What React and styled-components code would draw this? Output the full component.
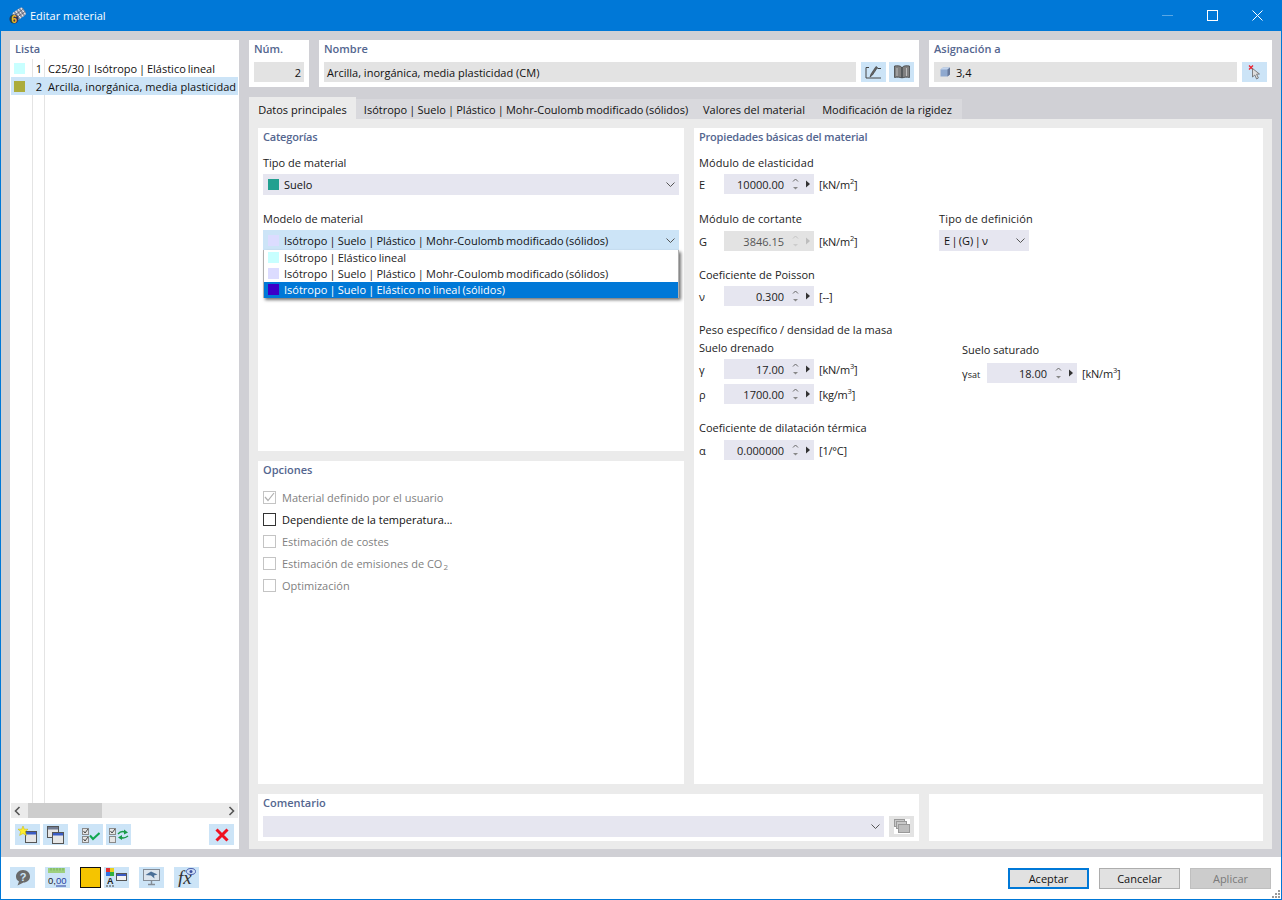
import React from "react";
import styled, { createGlobalStyle } from "styled-components";

const Global = createGlobalStyle`
html, body { margin: 0; padding: 0; background: #fff; }
body { font-family: "Open Sans", "Noto Sans", sans-serif; font-size: 11px; color: #1a1a1a; }
* { box-sizing: border-box; }
sup { line-height: 0; font-size: 7.5px; }
`;

const Window = styled.div`
  width: 1282px;
  height: 900px;
  display: flex;
  flex-direction: column;
  border: 1px solid #0078d7;
  border-top: 0;
  background: #fff;
  overflow: hidden;
`;
const TitleBar = styled.div`
  height: 31px;
  flex: none;
  background: #0078d7;
  color: #fff;
  display: flex;
  align-items: center;
  padding: 0 1px 0 8px;
  font-size: 11px;
`;
const TitleText = styled.span`
  margin-left: 4px;
  flex: 1;
`;
const WinBtn = styled.div`
  width: 45px;
  height: 31px;
  display: flex;
  align-items: center;
  justify-content: center;
  opacity: ${(p) => (p.$off ? 0.35 : 1)};
`;
const Body = styled.div`
  height: 826px;
  flex: none;
  background: #d0d0d5;
  padding: 9px 9px 8px 9px;
  display: flex;
  gap: 10px;
`;
const ListPanel = styled.div`
  width: 229px;
  background: #fff;
  display: flex;
  flex-direction: column;
  padding: 0 1px 4px;
`;
const Heading = styled.div`
  height: 17px;
  line-height: 17px;
  font-weight: 600;
  color: #54668f;
  padding-left: ${(p) => p.$pad ?? 5}px;
  letter-spacing: ${(p) => p.$ls ?? 0}px;
`;
const ListBody = styled.div`
  flex: 1;
  position: relative;
  margin-top: 2px;
  background-image: linear-gradient(#e4e4e4, #e4e4e4), linear-gradient(#e4e4e4, #e4e4e4);
  background-size: 1px 100%, 1px 100%;
  background-position: 21px 0, 33px 0;
  background-repeat: no-repeat;
`;
const ListRow = styled.div`
  height: 18px;
  display: flex;
  align-items: center;
  background: ${(p) => (p.$sel ? "#cce4f7" : "transparent")};
  color: #111;
`;
const Swatch = styled.span`
  width: 11px;
  height: 11px;
  flex: none;
  background: ${(p) => p.$c};
`;
const ListSwatch = styled(Swatch)`
  margin-left: 3px;
`;
const ListNum = styled.span`
  width: 17px;
  text-align: right;
`;
const ListText = styled.span`
  margin-left: 6px;
  white-space: nowrap;
  word-spacing: ${(p) => (p.$pipes ? "-1px" : "0")};
  letter-spacing: ${(p) => (p.$pipes ? "0" : "0.05px")};
`;
const HScroll = styled.div`
  height: 15px;
  flex: none;
  background: #ebebeb;
  display: flex;
  align-items: center;
  justify-content: space-between;
  padding: 0 3px;
  position: relative;
`;
const Thumb = styled.div`
  position: absolute;
  left: 17px;
  top: 0;
  width: 74px;
  height: 15px;
  background: #cdcdcd;
`;
const ListTools = styled.div`
  display: flex;
  padding: 6px 4px 0;
  height: 27px;
  flex: none;
`;
const IconBtn = styled.div`
  width: 25px;
  height: ${(p) => p.$h ?? 21}px;
  flex: none;
  background: ${(p) => (p.$grey ? "#e3e3e3" : "#cce4f7")};
  display: flex;
  align-items: center;
  justify-content: center;
  margin-left: ${(p) => p.$ml ?? 0}px;
`;
const Main = styled.div`
  flex: 1;
  display: flex;
  flex-direction: column;
  min-width: 0;
`;
const TopRow = styled.div`
  display: flex;
  gap: 10px;
  height: 47px;
  flex: none;
`;
const TopCard = styled.div`
  width: ${(p) => p.$w}px;
  background: #fff;
  padding: 0 5px;
`;
const TopHeading = styled(Heading)`
  padding-left: 0;
  height: 18px;
  line-height: 18px;
  margin-bottom: 4px;
`;
const InputLine = styled.div`
  display: flex;
  gap: ${(p) => p.$gap ?? 5}px;
`;
const Readonly = styled.div`
  flex: 1;
  height: 20px;
  background: #e3e3e3;
  display: flex;
  align-items: center;
  padding: 0 3px 0 ${(p) => p.$pl ?? 3}px;
  justify-content: ${(p) => (p.$right ? "flex-end" : "flex-start")};
  gap: 5px;
  color: #111;
`;
const Tabs = styled.div`
  display: flex;
  align-items: flex-end;
  margin-top: 10px;
  height: 22px;
  flex: none;
`;
const Tab = styled.div`
  height: ${(p) => (p.$active ? 22 : 20)}px;
  padding-top: ${(p) => (p.$active ? 3 : 1)}px;
  line-height: 19px;
  width: ${(p) => p.$w}px;
  white-space: nowrap;
  background: ${(p) => (p.$active ? "#ebebeb" : "#d9d9dd")};
  color: #111;
  text-align: center;
  word-spacing: ${(p) => (p.$pipes ? "-0.7px" : "0")};
`;
const TabPanel = styled.div`
  flex: 1;
  background: #ebebeb;
  padding: 9px 9px 8px;
  display: flex;
  flex-direction: column;
  gap: 10px;
`;
const Columns = styled.div`
  display: flex;
  gap: 10px;
  height: 656px;
  flex: none;
`;
const LeftCol = styled.div`
  width: 426px;
  display: flex;
  flex-direction: column;
  gap: 10px;
`;
const Card = styled.div`
  background: #fff;
  flex: ${(p) => p.$flex ?? 1};
  padding: 0 5px;
  position: relative;
  min-width: 0;
`;
const CardHeading = styled(Heading)`
  padding-left: 0;
  height: 18px;
  line-height: 18px;
`;
const FieldLabel = styled.div`
  height: 16px;
  line-height: 16px;
  color: #222;
  margin-top: ${(p) => p.$mt ?? 0}px;
  margin-bottom: ${(p) => p.$mb ?? 3}px;
  white-space: nowrap;
  letter-spacing: ${(p) => p.$ls ?? 0}px;
`;
const Select = styled.div`
  height: ${(p) => p.$h ?? 20}px;
  width: ${(p) => (p.$w ? p.$w + "px" : "auto")};
  flex: ${(p) => (p.$grow ? 1 : "none")};
  background: ${(p) => (p.$open ? "#cce4f7" : "#e6e6f0")};
  display: flex;
  align-items: center;
  padding-left: 5px;
  padding-right: 4px;
  gap: 5px;
  color: #111;
`;
const SelectText = styled.span`
  flex: 1;
  white-space: nowrap;
  word-spacing: ${(p) => p.$ws ?? 0}px;
`;
const DropWrap = styled.div`
  position: relative;
`;
const DropList = styled.div`
  position: absolute;
  top: 20px;
  left: 0;
  right: 0;
  background: #fff;
  border-left: 1px solid #b0b0b0;
  border-right: 1px solid #b0b0b0;
  box-shadow: 2px 2px 3px rgba(0, 0, 0, 0.55);
  z-index: 5;
`;
const DropItem = styled.div`
  height: 16px;
  display: flex;
  align-items: center;
  gap: 5px;
  padding: 0 0 1px 4px;
  word-spacing: -0.7px;
  background: ${(p) => (p.$hi ? "#0078d7" : "transparent")};
  color: ${(p) => (p.$hi ? "#fff" : "#222")};
`;
const Option = styled.div`
  height: 22px;
  display: flex;
  align-items: center;
  gap: 6px;
  color: ${(p) => (p.$on ? "#111" : "#7f7f7f")};
  white-space: nowrap;
`;
const Box = styled.span`
  width: 13px;
  height: 13px;
  flex: none;
  border: 1px solid ${(p) => (p.$on ? "#333" : "#c4c4c4")};
  display: flex;
  align-items: center;
  justify-content: center;
`;
const Options = styled.div`
  margin-top: 7px;
`;
const SmallTwo = styled.span`
  font-size: 8px;
  position: relative;
  top: 2px;
  margin-left: 1px;
`;
const RightGroups = styled.div`
  display: flex;
  flex-direction: column;
  padding-top: 9px;
`;
const Row = styled.div`
  display: flex;
  align-items: center;
  height: 20px;
  margin-top: ${(p) => p.$mt ?? 0}px;
`;
const Sym = styled.span`
  width: ${(p) => p.$w ?? 25}px;
  flex: none;
  color: #222;
  white-space: nowrap;
`;
const SymTail = styled.span`
  font-size: 9px;
`;
const Spin = styled.div`
  width: 90px;
  height: 20px;
  flex: none;
  background: ${(p) => (p.$off ? "#e3e3e3" : "#e6e6f0")};
  display: flex;
  align-items: center;
  justify-content: flex-end;
  padding-right: 4px;
  color: ${(p) => (p.$off ? "#555" : "#222")};
`;
const SpinVal = styled.span`
  margin-right: 8px;
`;
const Unit = styled.span`
  margin-left: 5px;
  color: #222;
  white-space: nowrap;
  letter-spacing: -0.2px;
`;
const TwoCols = styled.div`
  display: flex;
`;
const ColA = styled.div`
  width: ${(p) => p.$w}px;
  flex: none;
`;
const BottomRow = styled.div`
  display: flex;
  gap: 10px;
  height: 47px;
  flex: none;
`;
const CommentLine = styled.div`
  display: flex;
  gap: 5px;
  margin-top: 4px;
`;
const Footer = styled.div`
  flex: 1;
  display: flex;
  align-items: flex-start;
  padding: 10px 10px 0 9px;
  position: relative;
`;
const FootSpacer = styled.div`
  flex: 1;
`;
const ColorBox = styled.div`
  width: 21px;
  height: 21px;
  margin-left: 10px;
  background: #f5c400;
  border: 1px solid #111;
`;
const DlgBtn = styled.div`
  width: 81px;
  height: 21px;
  margin-top: 1px;
  margin-left: ${(p) => p.$ml ?? 10}px;
  display: flex;
  align-items: center;
  justify-content: center;
  background: ${(p) => (p.$off ? "#cccccc" : "#e1e1e1")};
  border: ${(p) => (p.$primary ? "2px solid #0078d7" : p.$off ? "1px solid #bfbfbf" : "1px solid #adadad")};
  color: ${(p) => (p.$off ? "#7a7a7a" : "#111")};
`;
const Grip = styled.svg`
  position: absolute;
  right: 0;
  bottom: 0;
`;

const Chevron = () => (
  <svg width="9" height="5" viewBox="0 0 9 5" fill="none">
    <path d="M0.5 0.5 L4.5 4.5 L8.5 0.5" stroke="#555" strokeWidth="1" />
  </svg>
);

const SpinArrows = ({ off }) => {
  const c = off ? "#c4c4c4" : "#666";
  return (
    <svg width="18" height="14" viewBox="0 0 18 14" style={{ flex: "none" }}>
      <path d="M1 4.5 L3.5 2 L6 4.5" fill="none" stroke={c} />
      <path d="M1 10 L6 10 L3.5 12.5 Z" fill={off ? "#ccc" : "#888"} />
      <path d="M14 3.5 L18 7 L14 10.5 Z" fill={off ? "#bdbdbd" : "#333"} />
    </svg>
  );
};

const AppIcon = () => (
  <svg width="17" height="17" viewBox="0 0 17 17">
    <g transform="rotate(-35 10 7)">
      <rect x="3.5" y="2.5" width="13" height="9" rx="3" fill="#8b92a3" />
      <path d="M6 2.5 V11.5 M9 2.5 V11.5 M12 2.5 V11.5 M15 3 V11" stroke="#f0f2f6" strokeWidth="1" />
      <path d="M3.5 5.5 H16.5 M3.5 8.5 H16.5" stroke="#50586a" strokeWidth="0.7" />
    </g>
    <circle cx="5" cy="12" r="4.6" fill="#263a5a" />
    <text x="5" y="15.6" textAnchor="middle" fontSize="10" fontWeight="700" fill="#f2bb1e" fontFamily="Liberation Sans">6</text>
  </svg>
);

const WindowSmall = ({ x, y, blue }) => (
  <g transform={`translate(${x} ${y})`}>
    <rect x="0.5" y="0.5" width="11" height="11" fill="#e6e6e6" stroke="#555" />
    <rect x="1" y="1" width="10" height="2.5" fill={blue ? "#3b5cc4" : "#6f7a92"} />
  </g>
);

const NewWindowIcon = () => (
  <svg width="21" height="18" viewBox="0 0 21 18">
    <WindowSmall x={8} y={5} blue />
    <path d="M6 0 L7.3 3.2 L11 3.2 L8.3 5.6 L9.4 9.4 L6 7.5 L2.6 9.4 L3.7 5.6 L1 3.2 L4.7 3.2 Z" fill="#ffee2e" stroke="#c9b400" strokeWidth="0.5" />
  </svg>
);
const CopyWindowIcon = () => (
  <svg width="17" height="18" viewBox="0 0 17 18">
    <WindowSmall x={0} y={0} />
    <WindowSmall x={5} y={6} blue />
  </svg>
);
const CheckBoxMini = ({ y, on }) => (
  <g transform={`translate(0 ${y})`}>
    <rect x="0.5" y="0.5" width="6" height="6" fill="#e4e4e4" stroke="#8a8a8a" />
    {on && <path d="M1.5 3 L3 5 L6 1" fill="none" stroke="#444" />}
  </g>
);
const CheckAllIcon = () => (
  <svg width="18" height="16" viewBox="0 0 18 16">
    <CheckBoxMini y={1} on />
    <CheckBoxMini y={9} on />
    <path d="M8 8.5 L11 12 L17.5 6" fill="none" stroke="#10a850" strokeWidth="2" />
  </svg>
);
const CheckSwapIcon = () => (
  <svg width="20" height="16" viewBox="0 0 20 16">
    <CheckBoxMini y={1} on />
    <CheckBoxMini y={9} />
    <path d="M9 7 Q12 3.5 16 5" fill="none" stroke="#1a9a48" strokeWidth="1.5" />
    <path d="M15 2.5 L19 5.5 L15 7.5 Z" fill="#1a9a48" />
    <path d="M19 9 Q15 12 12 10.5" fill="none" stroke="#1a9a48" strokeWidth="1.5" />
    <path d="M13 8 L9 10.5 L13 13 Z" fill="#1a9a48" />
  </svg>
);
const DeleteIcon = () => (
  <svg width="14" height="14" viewBox="0 0 14 14">
    <path d="M1.5 1.5 L12.5 12.5 M12.5 1.5 L1.5 12.5" stroke="#f01020" strokeWidth="3" />
  </svg>
);
const EditIcon = () => (
  <svg width="17" height="15" viewBox="0 0 17 15" fill="none">
    <path d="M4 2.5 L1 2.5 L1 13 L16 13 M12.5 3.5 L16 3.5" stroke="#444" />
    <path d="M5 12 L6 9 L11 1.5 L12.5 2.5 L7.5 10 Z" fill="#666" stroke="#333" strokeWidth="0.6" />
  </svg>
);
const BookIcon = () => (
  <svg width="16" height="14" viewBox="0 0 16 14">
    <path d="M0.5 1 C3 0.5 6 0.5 7.5 2 L7.5 13 C6 12 3 12 0.5 12.5 Z" fill="#808080" stroke="#333" strokeWidth="0.7" />
    <path d="M15.5 1 C13 0.5 10 0.5 8.5 2 L8.5 13 C10 12 13 12 15.5 12.5 Z" fill="#808080" stroke="#333" strokeWidth="0.7" />
    <path d="M3 3 V11 M12.5 3 V11" stroke="#ccc" strokeWidth="0.8" />
  </svg>
);
const CursorIcon = () => (
  <svg width="14" height="15" viewBox="0 0 14 15">
    <path d="M1 0.5 L5 4.5 M5 0.5 L1 4.5" stroke="#ee2030" strokeWidth="1.3" />
    <path d="M4.5 3.5 L4.5 12 L6.8 10 L8.6 14 L10.4 13 L8.6 9.2 L11.5 9 Z" fill="#ddd" stroke="#666" strokeWidth="0.8" />
  </svg>
);
const SolidIcon = () => (
  <svg width="11" height="10" viewBox="0 0 11 10">
    <path d="M0.5 2.5 L3 0.5 L10 0.5 L10 7.5 L7.5 9.5 L0.5 9.5 Z" fill="#8fa9cf" />
    <path d="M0.5 2.5 L7.5 2.5 L10 0.5 L3 0.5 Z" fill="#c3d4ec" />
    <path d="M7.5 2.5 L10 0.5 L10 7.5 L7.5 9.5 Z" fill="#66789a" />
  </svg>
);
const CommentIcon = () => (
  <svg width="16" height="15" viewBox="0 0 16 15">
    <rect width="16" height="15" fill="#fff" />
    <rect x="0.5" y="0.5" width="10" height="7" fill="#c8c8c8" stroke="#999" />
    <rect x="2.5" y="2.5" width="10" height="7" fill="#c8c8c8" stroke="#999" />
    <rect x="4.5" y="5.5" width="11" height="8" fill="#bdbdbd" stroke="#999" />
  </svg>
);
const HelpIcon = () => (
  <svg width="17" height="17" viewBox="0 0 17 17">
    <path d="M9 1 C13.5 1 16 4 16 7.5 C16 11 13 13.5 9.5 13.5 L3.5 16.5 L5 12.5 C3 11.5 2 9.7 2 7.5 C2 4 4.8 1 9 1 Z" fill="#6a6a6a" />
    <text x="9" y="11.5" fontSize="11" fontWeight="700" fill="#cce4f7" textAnchor="middle" fontFamily="Liberation Sans">?</text>
  </svg>
);
const DecimalIcon = () => (
  <svg width="20" height="19" viewBox="0 0 20 19">
    <rect x="0" y="0" width="17" height="5" fill="#9fd07f" />
    <path d="M3 0 V2.5 M6 0 V2.5 M9 0 V2.5 M12 0 V2.5 M15 0 V2.5" stroke="#5fa34f" strokeWidth="0.7" />
    <text x="0" y="16" fontSize="9.5" fill="#222" fontFamily="Liberation Sans">0,<tspan fill="#2a3fa0">00</tspan></text>
    <path d="M8 18 H18" stroke="#2a3fa0" />
  </svg>
);
const ColorFontIcon = () => (
  <svg width="21" height="19" viewBox="0 0 21 19">
    <rect x="0" y="0" width="4" height="4" fill="#e53030" />
    <rect x="4" y="0" width="4" height="4" fill="#e8d020" />
    <rect x="0" y="4" width="4" height="4" fill="#3070e0" />
    <rect x="4" y="4" width="4" height="4" fill="#30b040" />
    <text x="1" y="16" fontSize="9" fontWeight="700" fill="#222" fontFamily="Liberation Sans">A</text>
    <path d="M0 18 H2 M3 18 H5 M6 18 H8" stroke="#444" strokeWidth="1.2" />
    <rect x="10.5" y="5.5" width="10" height="7" fill="#f2f2f2" stroke="#555" />
    <rect x="11" y="6" width="9" height="2" fill="#3b5cc4" />
  </svg>
);
const ViewIcon = () => (
  <svg width="17" height="17" viewBox="0 0 17 17">
    <rect x="0.5" y="0.5" width="16" height="11" fill="#dbe4ee" stroke="#848c96" />
    <path d="M2.5 6 L8 2.5 L14.5 5.5 L11 6.5 L11.5 9.5 L8 6.5 Z" fill="#4a6f98" />
    <path d="M5 15.5 H12 M8.5 12 V15.5" stroke="#848c96" strokeWidth="1.4" />
  </svg>
);
const FormulaIcon = () => (
  <svg width="20" height="19" viewBox="0 0 20 19">
    <text x="1" y="16" fontSize="19" fontStyle="italic" fill="#333" fontFamily="Liberation Serif">fx</text>
    <ellipse cx="14" cy="3.5" rx="4.5" ry="3" fill="#cfe0f5" stroke="#4a5fae" />
    <circle cx="14" cy="3.5" r="1.5" fill="#3b4fa0" />
  </svg>
);
const Tick = () => (
  <svg width="11" height="10" viewBox="0 0 11 10">
    <path d="M1 5 L4 8.5 L10 1" fill="none" stroke="#b0b0b0" strokeWidth="1.2" />
  </svg>
);

const SpinField = ({ sym, val, unit, off, symW, mt }) => (
  <Row $mt={mt}>
    <Sym $w={symW}>{sym}</Sym>
    <Spin $off={off}>
      <SpinVal>{val}</SpinVal>
      <SpinArrows off={off} />
    </Spin>
    <Unit>{unit}</Unit>
  </Row>
);

const m2 = <>[kN/m<sup>2</sup>]</>;
const m3 = <>[kN/m<sup>3</sup>]</>;

export default function App() {
  return (
    <>
      <Global />
      <Window>
        <TitleBar>
          <AppIcon />
          <TitleText>Editar material</TitleText>
          <WinBtn $off>
            <svg width="11" height="1"><rect width="11" height="1" fill="#fff" /></svg>
          </WinBtn>
          <WinBtn>
            <svg width="11" height="11" fill="none"><rect x="0.5" y="0.5" width="10" height="10" stroke="#fff" /></svg>
          </WinBtn>
          <WinBtn>
            <svg width="11" height="11" fill="none"><path d="M0.5 0.5 L10.5 10.5 M10.5 0.5 L0.5 10.5" stroke="#fff" /></svg>
          </WinBtn>
        </TitleBar>
        <Body>
          <ListPanel>
            <Heading $pad={4}>Lista</Heading>
            <ListBody>
              <ListRow>
                <ListSwatch $c="#c8ffff" />
                <ListNum>1</ListNum>
                <ListText $pipes>C25/30 | Isótropo | Elástico lineal</ListText>
              </ListRow>
              <ListRow $sel>
                <ListSwatch $c="#acac3c" />
                <ListNum>2</ListNum>
                <ListText>Arcilla, inorgánica, media plasticidad</ListText>
              </ListRow>
            </ListBody>
            <HScroll>
              <Thumb />
              <svg width="7" height="10" fill="none"><path d="M5.5 1 L1.5 5 L5.5 9" stroke="#555" strokeWidth="1.6" /></svg>
              <svg width="7" height="10" fill="none"><path d="M1.5 1 L5.5 5 L1.5 9" stroke="#555" strokeWidth="1.6" /></svg>
            </HScroll>
            <ListTools>
              <IconBtn><NewWindowIcon /></IconBtn>
              <IconBtn $ml={3}><CopyWindowIcon /></IconBtn>
              <IconBtn $ml={10}><CheckAllIcon /></IconBtn>
              <IconBtn $ml={3}><CheckSwapIcon /></IconBtn>
              <IconBtn $ml={78}><DeleteIcon /></IconBtn>
            </ListTools>
          </ListPanel>
          <Main>
            <TopRow>
              <TopCard $w={60}>
                <TopHeading>Núm.</TopHeading>
                <InputLine><Readonly $right>2</Readonly></InputLine>
              </TopCard>
              <TopCard $w={600}>
                <TopHeading>Nombre</TopHeading>
                <InputLine>
                  <Readonly>Arcilla, inorgánica, media plasticidad (CM)</Readonly>
                  <IconBtn $h={20}><EditIcon /></IconBtn>
                  <IconBtn $h={20} $ml={-2}><BookIcon /></IconBtn>
                </InputLine>
              </TopCard>
              <TopCard $w={343}>
                <TopHeading>Asignación a</TopHeading>
                <InputLine>
                  <Readonly $pl={6}><SolidIcon />3,4</Readonly>
                  <IconBtn $h={20}><CursorIcon /></IconBtn>
                </InputLine>
              </TopCard>
            </TopRow>
            <Tabs>
              <Tab $active $w={107}>Datos principales</Tab>
              <Tab $w={340} $pipes>Isótropo | Suelo | Plástico | Mohr-Coulomb modificado (sólidos)</Tab>
              <Tab $w={116}>Valores del material</Tab>
              <Tab $w={150}>Modificación de la rigidez</Tab>
            </Tabs>
            <TabPanel>
              <Columns>
                <LeftCol>
                  <Card>
                    <CardHeading $ls={-0.2}>Categorías</CardHeading>
                    <FieldLabel $mt={9}>Tipo de material</FieldLabel>
                    <Select $h={21}>
                      <Swatch $c="#22a090" />
                      <SelectText>Suelo</SelectText>
                      <Chevron />
                    </Select>
                    <FieldLabel $mt={16}>Modelo de material</FieldLabel>
                    <DropWrap>
                      <Select $open>
                        <Swatch $c="#dcdcff" />
                        <SelectText $ws={-0.7}>Isótropo | Suelo | Plástico | Mohr-Coulomb modificado (sólidos)</SelectText>
                        <Chevron />
                      </Select>
                      <DropList>
                        <DropItem>
                          <Swatch $c="#c8ffff" />
                          Isótropo | Elástico lineal
                        </DropItem>
                        <DropItem>
                          <Swatch $c="#dcdcff" />
                          Isótropo | Suelo | Plástico | Mohr-Coulomb modificado (sólidos)
                        </DropItem>
                        <DropItem $hi>
                          <Swatch $c="#3c00c8" />
                          Isótropo | Suelo | Elástico no lineal (sólidos)
                        </DropItem>
                      </DropList>
                    </DropWrap>
                  </Card>
                  <Card>
                    <CardHeading>Opciones</CardHeading>
                    <Options>
                      <Option><Box><Tick /></Box>Material definido por el usuario</Option>
                      <Option $on><Box $on />Dependiente de la temperatura...</Option>
                      <Option><Box />Estimación de costes</Option>
                      <Option><Box /><span>Estimación de emisiones de CO<SmallTwo>2</SmallTwo></span></Option>
                      <Option><Box />Optimización</Option>
                    </Options>
                  </Card>
                </LeftCol>
                <Card>
                  <CardHeading $ls={-0.2}>Propiedades básicas del material</CardHeading>
                  <RightGroups>
                    <FieldLabel $ls={0.1}>Módulo de elasticidad</FieldLabel>
                    <SpinField sym="E" val="10000.00" unit={m2} />
                    <TwoCols>
                      <ColA $w={240}>
                        <FieldLabel $mt={17} $mb={4} $ls={0.1}>Módulo de cortante</FieldLabel>
                        <SpinField sym="G" val="3846.15" unit={m2} off />
                      </ColA>
                      <div>
                        <FieldLabel $mt={17} $ls={0.15}>Tipo de definición</FieldLabel>
                        <Select $w={90} $h={21}>
                          <SelectText $ws={-1.5}>E | (G) | ν</SelectText>
                          <Chevron />
                        </Select>
                      </div>
                    </TwoCols>
                    <FieldLabel $mt={16}>Coeficiente de Poisson</FieldLabel>
                    <SpinField sym="ν" val="0.300" unit="[--]" />
                    <TwoCols>
                      <ColA $w={263}>
                        <FieldLabel $mt={16} $mb={2}>Peso específico / densidad de la masa</FieldLabel>
                        <FieldLabel>Suelo drenado</FieldLabel>
                        <SpinField sym="γ" val="17.00" unit={m3} />
                        <SpinField sym="ρ" val="1700.00" unit={<>[kg/m<sup>3</sup>]</>} mt={5} />
                      </ColA>
                      <div>
                        <FieldLabel $mt={36} $mb={5}>Suelo saturado</FieldLabel>
                        <SpinField sym={<>γ<SymTail>sat</SymTail></>} val="18.00" unit={m3} />
                      </div>
                    </TwoCols>
                    <FieldLabel $mt={16} $mb={4}>Coeficiente de dilatación térmica</FieldLabel>
                    <SpinField sym="α" val="0.000000" unit="[1/°C]" />
                  </RightGroups>
                </Card>
              </Columns>
              <BottomRow>
                <Card $flex="0 0 661px">
                  <CardHeading>Comentario</CardHeading>
                  <CommentLine>
                    <Select $h={21} $grow>
                      <SelectText />
                      <Chevron />
                    </Select>
                    <IconBtn $grey><CommentIcon /></IconBtn>
                  </CommentLine>
                </Card>
                <Card />
              </BottomRow>
            </TabPanel>
          </Main>
        </Body>
        <Footer>
          <IconBtn><HelpIcon /></IconBtn>
          <IconBtn $ml={10}><DecimalIcon /></IconBtn>
          <ColorBox />
          <IconBtn $ml={3}><ColorFontIcon /></IconBtn>
          <IconBtn $ml={10}><ViewIcon /></IconBtn>
          <IconBtn $ml={10}><FormulaIcon /></IconBtn>
          <FootSpacer />
          <DlgBtn $primary>Aceptar</DlgBtn>
          <DlgBtn>Cancelar</DlgBtn>
          <DlgBtn $off>Aplicar</DlgBtn>
          <Grip width="9" height="9" viewBox="0 0 9 9" fill="#9a9a9a">
            <rect x="6" y="0" width="2" height="2" />
            <rect x="3" y="3" width="2" height="2" />
            <rect x="6" y="3" width="2" height="2" />
            <rect x="0" y="6" width="2" height="2" />
            <rect x="3" y="6" width="2" height="2" />
            <rect x="6" y="6" width="2" height="2" />
          </Grip>
        </Footer>
      </Window>
    </>
  );
}
